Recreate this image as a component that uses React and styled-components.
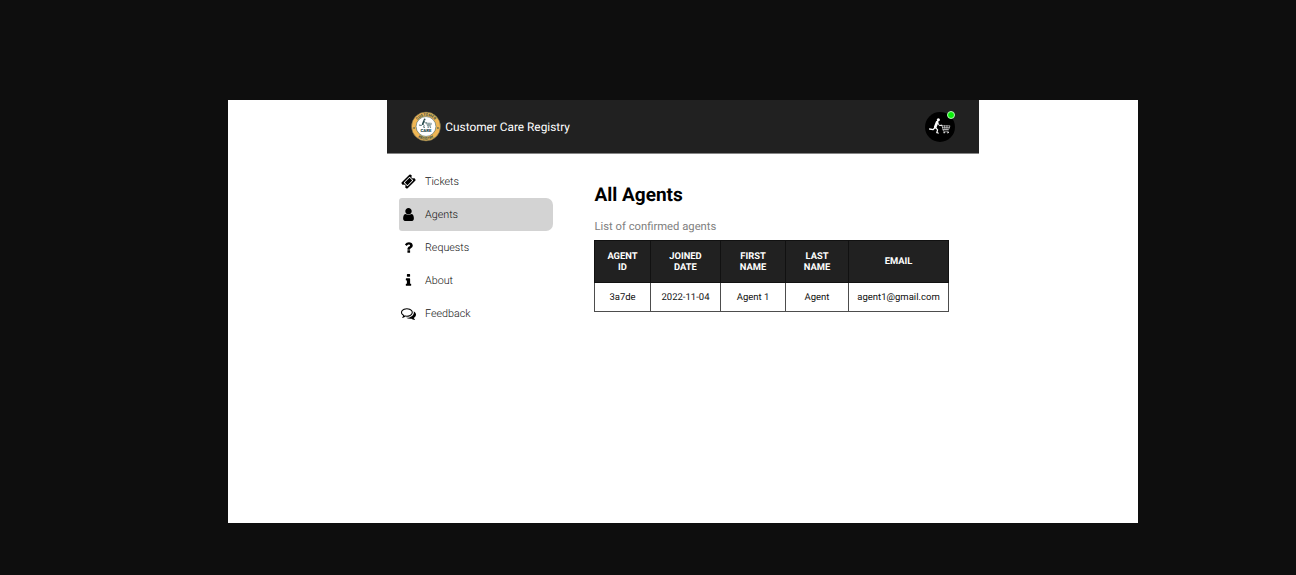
import React from "react";
import styled, { createGlobalStyle } from "styled-components";

const GlobalStyle = createGlobalStyle`
  * { box-sizing: border-box; }
  html, body { margin: 0; background: #0e0e0e; }
  body { font-family: Roboto, "Liberation Sans", sans-serif; color: #000; overflow: hidden; text-rendering: geometricPrecision; }
`;

const Backdrop = styled.div`
  height: 575px;
  padding: 100px 158px 52px 228px;
  background: #0e0e0e;
`;

const Page = styled.div`
  height: 423px;
  padding: 0 159px;
  background: #fff;
  will-change: opacity;
`;

const Header = styled.header`
  display: flex;
  align-items: center;
  justify-content: space-between;
  height: 54px;
  padding: 0 24px;
  background: #212121;
  border-bottom: 1px solid #858585;
`;

const Brand = styled.div`
  display: flex;
  align-items: center;
  gap: 4.3px;
  color: #fff;
  font-size: 11.85px;
  white-space: nowrap;
`;

const Avatar = styled.div`
  position: relative;
  width: 30px;
  height: 30px;
  margin-top: 1px;
  border-radius: 50%;
  background: #000;
`;

const OnlineDot = styled.span`
  position: absolute;
  top: -1px;
  right: 0;
  width: 8px;
  height: 8px;
  border: 1px solid #b8f5b8;
  border-radius: 50%;
  background: #08f008;
`;

const Body = styled.div`
  display: flex;
`;

const Sidebar = styled.nav`
  display: flex;
  flex-direction: column;
  width: 166px;
  padding: 11.4px 0 0 12px;
`;

const NavItem = styled.a`
  display: flex;
  align-items: center;
  gap: 9px;
  height: 33px;
  padding-left: 2px;
  border-radius: 3px 7px 7px 3px;
  background: ${(p) => (p.$active ? "#d3d3d3" : "transparent")};
  color: #111;
  font-size: 10.75px;
  font-weight: 300;
`;

const Glyph = styled.svg`
  display: block;
  width: 15px;
  height: 15px;
  fill: #000;
`;

const Main = styled.main`
  padding: 28px 0 0 41px;
`;

const Title = styled.h1`
  margin: 0 0 0 0.5px;
  font-size: 19px;
  line-height: 26px;
  font-weight: 700;
`;

const Subtitle = styled.p`
  margin: 12px 0 6px 0.5px;
  font-size: 11.25px;
  line-height: 14px;
  color: #808080;
`;

const Table = styled.table`
  width: 355px;
  table-layout: fixed;
  border-collapse: collapse;
  text-align: center;
`;

const HeadCell = styled.th`
  width: ${(p) => p.$width}px;
  height: 42px;
  padding: 1px 10px 0;
  border: 1px solid #111;
  background: #212121;
  color: #fff;
  font-size: 9.4px;
  line-height: 11.3px;
  font-weight: 700;
`;

const Cell = styled.td`
  height: 29px;
  padding: 2px 0 0;
  border: 1px solid #4d4d4d;
  color: #111;
  font-size: 9.5px;
  line-height: 12px;
  white-space: nowrap;
`;

const NAV = [
  {
    label: "Tickets",
    path: "M1024 452l316 316-572 572-316-316zm-211 979l618-618q19-19 19-45t-19-45l-362-362q-18-18-45-18t-45 18l-618 618q-19 19-19 45t19 45l362 362q18 18 45 18t45-18zm889-637l-907 908q-37 37-90.5 37t-90.5-37l-126-126q56-56 56-136t-56-136-136-56-136 56l-125-126q-37-37-37-90.5t37-90.5l907-906q37-37 90.5-37t90.5 37l125 125q-56 56-56 136t56 136 136 56 136-56l126 125q37 37 37 90.5t-37 90.5z",
  },
  {
    label: "Agents",
    active: true,
    path: "M1536 1399q0 109-62.5 187t-150.5 78h-854q-88 0-150.5-78t-62.5-187q0-85 8.5-160.5t31.5-152 58.5-131 94-89 134.5-34.5q131 128 313 128t313-128q76 0 134.5 34.5t94 89 58.5 131 31.5 152 8.5 160.5zm-256-887q0 159-112.5 271.5t-271.5 112.5-271.5-112.5-112.5-271.5 112.5-271.5 271.5-112.5 271.5 112.5 112.5 271.5z",
  },
  {
    label: "Requests",
    path: "M1088 1256v240q0 16-12 28t-28 12h-240q-16 0-28-12t-12-28v-240q0-16 12-28t28-12h240q16 0 28 12t12 28zm316-600q0 54-15.5 101t-35 76.5-55 59.5-57.5 43.5-61 35.5q-41 23-68.5 65t-27.5 67q0 17-12 32.5t-28 15.5h-240q-15 0-25.5-18.5t-10.5-37.5v-45q0-83 65-156.5t143-108.5q59-27 84-56t25-76q0-42-46.5-74t-107.5-32q-65 0-108 29-35 25-107 115-13 16-31 16-12 0-25-8l-164-125q-13-10-15.5-25t5.5-28q160-266 464-266 80 0 161 31t146 83 106 127.5 41 158.5z",
  },
  {
    label: "About",
    path: "M1216 1344v128q0 26-19 45t-45 19h-512q-26 0-45-19t-19-45v-128q0-26 19-45t45-19h64v-384h-64q-26 0-45-19t-19-45v-128q0-26 19-45t45-19h384q26 0 45 19t19 45v576h64q26 0 45 19t19 45zm-128-1152v192q0 26-19 45t-45 19h-256q-26 0-45-19t-19-45v-192q0-26 19-45t45-19h256q26 0 45 19t19 45z",
  },
  {
    label: "Feedback",
    path: "M704 384q-153 0-286 52t-211.5 141-78.5 191q0 82 53 158t149 132l97 56-35 84q34-20 62-39l44-31 53 10q78 14 153 14 153 0 286-52t211.5-141 78.5-191-78.5-191-211.5-141-286-52zm0-128q191 0 353.5 68.5t256.5 186.5 94 257-94 257-256.5 186.5-353.5 68.5q-86 0-176-16-124 88-278 128-36 9-86 16h-3q-11 0-20.5-8t-11.5-21q-1-3-1-6.5t.5-6.5 2-6l2.5-5 3.5-5.5 4-5 4.5-5 4-4.5q5-6 23-25t26-29.5 22.5-29 25-38.5 20.5-44q-124-72-195-177t-71-224q0-139 94-257t256.5-186.5 353.5-68.5zm822 1169q10 24 20.5 44t25 38.5 22.5 29 26 29.5 23 25q1 1 4 4.5t4.5 5 4 5 3.5 5.5l2.5 5 2 6 .5 6.5-1 6.5q-3 14-13 22t-22 7q-50-7-86-16-154-40-278-128-90 16-176 16-271 0-472-132 58 4 88 4 161 0 309-45t264-129q125-92 192-212t67-254q0-77-23-152 129 71 204 178t75 230q0 120-71 224.5t-195 176.5z",
  },
];

const COLUMNS = [
  { label: "AGENT ID", width: 56 },
  { label: "JOINED DATE", width: 70 },
  { label: "FIRST NAME", width: 65 },
  { label: "LAST NAME", width: 63 },
  { label: "EMAIL", width: 100 },
];

const ROWS = [["3a7de", "2022-11-04", "Agent 1", "Agent", "agent1@gmail.com"]];

/* Figure leaning forward and pushing a shopping cart, in a 31 unit box. */
function Runner({ color }) {
  return (
    <g fill="none" stroke={color} strokeLinecap="round" strokeLinejoin="round">
      <circle cx="13.8" cy="8" r="1.6" fill={color} stroke="none" />
      <path d="M12.6 10.4L10.6 15.6" strokeWidth="2.8" />
      <path d="M13.2 11.2l1.6 2.8 2.6-.2" strokeWidth="1" />
      <path d="M10.4 16l-2 2.2-3.6-.6" strokeWidth="1.4" />
      <path d="M11 16.2l2 2.2-.8 3 1.4.3" strokeWidth="1.3" />
      <path d="M16.5 13.6h1l1.6 6.2h5M17.6 14.3h8.2l-1.4 3.8h-5.8M18 16.2h7M20.2 14.3l.5 3.8M22.7 14.3v3.8" strokeWidth="0.6" />
      <circle cx="19.8" cy="21.3" r="0.6" strokeWidth="0.6" />
      <circle cx="23.6" cy="21.3" r="0.6" strokeWidth="0.6" />
    </g>
  );
}

function Logo() {
  return (
    <svg width="30" height="31" viewBox="0 0 62 62">
      <defs>
        <path id="ring-top" d="M9 31a22 22 0 0 1 44 0" />
        <path id="ring-bottom" d="M3.5 31a27.5 27.5 0 0 0 55 0" />
      </defs>
      <circle cx="31" cy="31" r="30" fill="#efb654" stroke="#58604c" strokeWidth="1.2" />
      <circle cx="31" cy="31" r="20.5" fill="#fff" stroke="#3d6060" strokeWidth="1.2" />
      <g fill="#24484a" fontFamily="Roboto" fontWeight="700" fontSize="7.6" textAnchor="middle">
        <text><textPath href="#ring-top" startOffset="50%">CUSTOMER</textPath></text>
        <text><textPath href="#ring-bottom" startOffset="50%">REGISTRY</textPath></text>
        <text x="31" y="43" fontSize="9" fontWeight="900">CARE</text>
      </g>
      <circle cx="6.3" cy="34" r="1.7" fill="#24484a" />
      <circle cx="55.7" cy="34" r="1.7" fill="#24484a" />
      <g transform="translate(11.5 7) scale(1.2)"><Runner color="#24484a" /></g>
    </svg>
  );
}

export default function App() {
  return (
    <Backdrop>
      <GlobalStyle />
      <Page>
        <Header>
          <Brand>
            <Logo />
            <span>Customer Care Registry</span>
          </Brand>
          <Avatar>
            <svg width="30" height="30" viewBox="0 0 31 31" aria-hidden="true">
              <Runner color="#fff" />
            </svg>
            <OnlineDot />
          </Avatar>
        </Header>
        <Body>
          <Sidebar>
            {NAV.map((item) => (
              <NavItem key={item.label} $active={item.active}>
                <Glyph viewBox="0 0 1792 1792" aria-hidden="true">
                  <path d={item.path} />
                </Glyph>
                {item.label}
              </NavItem>
            ))}
          </Sidebar>
          <Main>
            <Title>All Agents</Title>
            <Subtitle>List of confirmed agents</Subtitle>
            <Table>
              <thead>
                <tr>
                  {COLUMNS.map((c) => (
                    <HeadCell key={c.label} $width={c.width}>{c.label}</HeadCell>
                  ))}
                </tr>
              </thead>
              <tbody>
                {ROWS.map((row) => (
                  <tr key={row[0]}>
                    {row.map((value) => (
                      <Cell key={value}>{value}</Cell>
                    ))}
                  </tr>
                ))}
              </tbody>
            </Table>
          </Main>
        </Body>
      </Page>
    </Backdrop>
  );
}
